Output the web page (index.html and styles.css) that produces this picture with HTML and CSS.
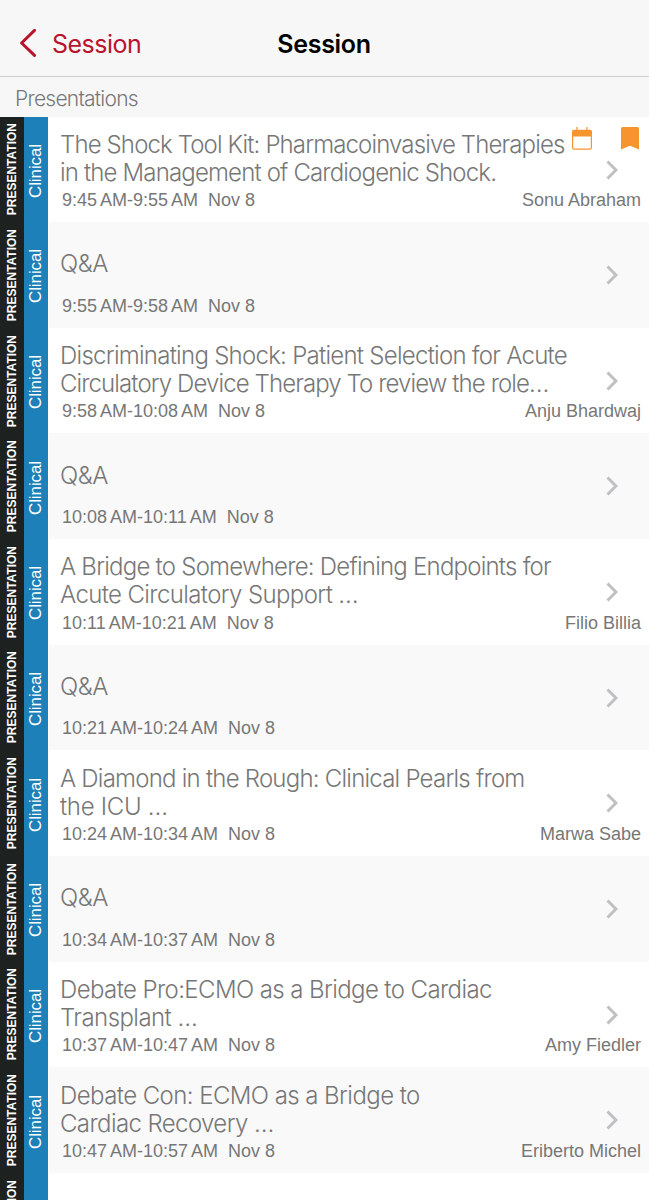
FILE: index.html
```html
<!DOCTYPE html>
<html lang="en">
<head>
    <meta charset="UTF-8" />
    <meta name="viewport" content="width=device-width, initial-scale=1.0" />
    <title>Session</title>
    <link rel="stylesheet" href="styles.css">
</head>
<body>
    <header class="navbar">
        <a class="back">
            <svg width="18" height="30" viewBox="0 0 18 30"><path d="M16.5 1.4 3.6 14 16.5 26.4" /></svg>
            <span>Session</span>
        </a>
        <h1>Session</h1>
    </header>

    <h2 class="section-title">Presentations</h2>

    <main class="list" id="list"></main>

    <script>
        // each title line: [text, tracking in px]
        const qa = [['Q&amp;A', -0.5]];
        const sessions = [
            { lines: [['The Shock Tool Kit: Pharmacoinvasive Therapies', -0.87], ['in the Management of Cardiogenic Shock.', -0.84]], start: '9:45', end: '9:55', speaker: 'Sonu Abraham', saved: true },
            { lines: qa, start: '9:55', end: '9:58' },
            { lines: [['Discriminating Shock: Patient Selection for Acute', -0.73], ['Circulatory Device Therapy To review the role…', -0.9]], start: '9:58', end: '10:08', speaker: 'Anju Bhardwaj' },
            { lines: qa, start: '10:08', end: '10:11' },
            { lines: [['A Bridge to Somewhere: Defining Endpoints for', -0.77], ['Acute Circulatory Support …', -0.62]], start: '10:11', end: '10:21', speaker: 'Filio Billia' },
            { lines: qa, start: '10:21', end: '10:24' },
            { lines: [['A Diamond in the Rough: Clinical Pearls from', -0.77], ['the ICU …', -0.3]], start: '10:24', end: '10:34', speaker: 'Marwa Sabe' },
            { lines: qa, start: '10:34', end: '10:37' },
            { lines: [['Debate Pro:ECMO as a Bridge to Cardiac', -0.6], ['Transplant …', -0.55]], start: '10:37', end: '10:47', speaker: 'Amy Fiedler' },
            { lines: [['Debate Con: ECMO as a Bridge to', -0.57], ['Cardiac Recovery …', -0.6]], start: '10:47', end: '10:57', speaker: 'Eriberto Michel' }
        ];

        const icons = `
            <div class="icons">
                <svg width="20" height="23" viewBox="0 0 20 23">
                    <path class="line" d="M5 0v4M15 0v4M.6 4v16.6q0 1.6 1.6 1.6h15.6q1.6 0 1.6-1.6V4" />
                    <path class="solid" d="M0 9.5V4.5Q0 2.8 1.8 2.8H18.2Q20 2.8 20 4.5V9.5Z" />
                </svg>
                <svg width="18" height="23" viewBox="0 0 18 23">
                    <path class="solid" d="M0 1.5Q0 0 1.5 0H16.5Q18 0 18 1.5V22.5L9 18.8 0 22.5Z" />
                </svg>
            </div>`;

        const labels = (type, track) => `
            <div class="type"><span>${type}</span></div>
            <div class="track"><span>${track}</span></div>`;

        const rows = sessions.map(s => `
            <article class="row">
                ${labels('PRESENTATION', 'Clinical')}
                <div class="content">
                    <div class="title">
                        ${s.lines.map(([text, tracking]) => `<span style="letter-spacing: ${tracking}px">${text}</span>`).join('')}
                    </div>
                    <div class="meta">
                        <span class="time">${s.start}<i></i>AM-${s.end}<i></i>AM<b></b>Nov 8</span>
                        <span>${s.speaker || ''}</span>
                    </div>
                    <svg class="chevron" width="12" height="20" viewBox="0 0 12 20"><path d="M1.5 1.5 10 10 1.5 18.5" /></svg>
                    ${s.saved ? icons : ''}
                </div>
            </article>`);

        // start of the next row, only its labels show
        rows.push(`<article class="row">${labels('PRESENTATION', '')}</article>`);

        document.getElementById('list').innerHTML = rows.join('');
    </script>
</body>
</html>
```
FILE: styles.css
```css
* {
    box-sizing: border-box;
}

body {
    margin: 0;
    height: 1200px;
    overflow: hidden;
    display: flex;
    flex-direction: column;
    background: #fff;
    font-family: "Liberation Sans", Arial, sans-serif;
    color: #777;
}

.navbar {
    flex: none;
    height: 77px;
    padding: 11px 19px 0 18px;
    display: grid;
    grid-template-columns: 1fr auto 1fr;
    align-items: center;
    background: #f7f7f7;
    border-bottom: 1px solid #cfcfcf;
    font-family: Inter, sans-serif;
    font-size: 25px;
}

.navbar h1 {
    margin: 0;
    font-size: 25px;
    font-weight: 600;
    letter-spacing: -0.3px;
    color: #000;
}

.back {
    display: flex;
    align-items: center;
    gap: 16px;
    color: #b9142d;
    letter-spacing: -0.5px;
}

.back svg {
    fill: none;
    stroke: #b9142d;
    stroke-width: 3;
    stroke-linecap: round;
    stroke-linejoin: round;
}

.section-title {
    flex: none;
    height: 39.5px;
    margin: 0;
    padding-left: 15px;
    background: #f7f7f7;
    font-family: Inter, sans-serif;
    font-size: 21px;
    font-weight: 300;
    line-height: 43px;
    letter-spacing: -0.75px;
}

.list {
    flex: 1;
    min-height: 0;
    overflow: hidden;
}

.row {
    height: 105.67px;
    display: grid;
    grid-template-columns: 24px 24px 1fr;
}

.row:nth-child(even) .content {
    background: #f9f9f9;
}

.type,
.track {
    display: flex;
    align-items: center;
    justify-content: center;
    color: #fff;
}

.type span,
.track span {
    writing-mode: vertical-rl;
    transform: rotate(180deg);
    white-space: nowrap;
}

.type {
    background: #1d2221;
    font-size: 12px;
    font-weight: bold;
}

.track {
    padding-top: 3px;
    background: #1d80b8;
    font-size: 17px;
    letter-spacing: -0.1px;
}

.content {
    position: relative;
    display: flex;
    flex-direction: column;
    padding: 13px 8px 10px 11px;
    margin-left: 1px;
}

.title {
    flex: 1;
    display: flex;
    flex-direction: column;
    justify-content: center;
    font-family: Inter, sans-serif;
    font-size: 24px;
    font-weight: 300;
    line-height: 28px;
    white-space: nowrap;
}

.meta {
    display: flex;
    justify-content: space-between;
    padding-left: 2px;
    font-size: 18px;
    line-height: 24px;
}

.time i {
    display: inline-block;
    width: 3px;
}

.time b {
    display: inline-block;
    width: 10px;
}

.chevron {
    position: absolute;
    right: 31px;
    top: 43px;
    fill: none;
    stroke: #c0c0c2;
    stroke-width: 3;
}

.icons {
    position: absolute;
    top: 10px;
    right: 10px;
    display: flex;
    gap: 29px;
}

.icons .line {
    fill: none;
    stroke: #f69530;
    stroke-width: 1.2;
}

.icons .solid {
    fill: #f69530;
}
```
